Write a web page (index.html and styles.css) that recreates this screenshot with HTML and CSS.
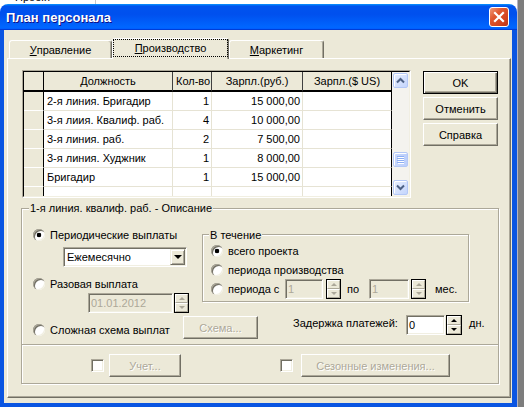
FILE: index.html
```html
<!DOCTYPE html>
<html lang="ru">
<head>
  <meta charset="UTF-8">
  <title>План персонала</title>
  <link rel="stylesheet" href="styles.css">
</head>
<body>
<div class="screen">
  <div class="desk">
    <div class="behind">
      <span class="behind__text">Проект</span>
    </div>
    <div class="dialog">
      <div class="titlebar">
        <span class="titlebar__text">План персонала</span>
        <span class="titlebar__close">
          <svg width="12" height="12" viewBox="0 0 12 12"><path d="M2 2L10 10M10 2L2 10" stroke="#fff" stroke-width="2.2" stroke-linecap="square"/></svg>
        </span>
      </div>
      <div class="frame">
        <div class="tabs">
          <div class="tab tab--mgmt"><u>У</u>правление</div>
          <div class="tab tab--prod tab--active"><span class="tab__focus"><u>П</u>роизводство</span></div>
          <div class="tab tab--mkt"><u>М</u>аркетинг</div>
        </div>
        <div class="page">
          <div class="page__top">
            <div class="grid">
              <div class="grid__inner">
                <div class="grid__rows">
                  <div class="grid__row grid__row--head">
                    <div class="cell cell--side"></div>
                    <div class="cell">Должность</div>
                    <div class="cell">Кол-во</div>
                    <div class="cell">Зарпл.(руб.)</div>
                    <div class="cell">Зарпл.($ US)</div>
                  </div>
                  <div class="grid__row">
                    <div class="cell cell--side"></div>
                    <div class="cell">2-я линия. Бригадир</div>
                    <div class="cell cell--num">1</div>
                    <div class="cell cell--num">15 000,00</div>
                    <div class="cell"></div>
                  </div>
                  <div class="grid__row">
                    <div class="cell cell--side"></div>
                    <div class="cell">3-я лиия. Квалиф. раб.</div>
                    <div class="cell cell--num">4</div>
                    <div class="cell cell--num">10 000,00</div>
                    <div class="cell"></div>
                  </div>
                  <div class="grid__row">
                    <div class="cell cell--side"></div>
                    <div class="cell">3-я линия. раб.</div>
                    <div class="cell cell--num">2</div>
                    <div class="cell cell--num">7 500,00</div>
                    <div class="cell"></div>
                  </div>
                  <div class="grid__row">
                    <div class="cell cell--side"></div>
                    <div class="cell">3-я линия. Худжник</div>
                    <div class="cell cell--num">1</div>
                    <div class="cell cell--num">8 000,00</div>
                    <div class="cell"></div>
                  </div>
                  <div class="grid__row">
                    <div class="cell cell--side"></div>
                    <div class="cell">Бригадир</div>
                    <div class="cell cell--num">1</div>
                    <div class="cell cell--num">15 000,00</div>
                    <div class="cell"></div>
                  </div>
                  <div class="grid__row">
                    <div class="cell cell--side"></div>
                    <div class="cell"></div>
                    <div class="cell"></div>
                    <div class="cell"></div>
                    <div class="cell"></div>
                  </div>
                </div>
                <div class="vscroll">
                  <div class="vscroll__btn">
                    <svg width="9" height="7" viewBox="0 0 9 7"><polyline points="1,5.5 4.5,2 8,5.5" fill="none" stroke="#4D6185" stroke-width="2"/></svg>
                  </div>
                  <div class="vscroll__track">
                    <div class="vscroll__thumb">
                      <svg width="7" height="8" viewBox="0 0 7 8"><path d="M0 0.5H7M0 2.5H7M0 4.5H7M0 6.5H7" stroke="#8DAEF3" stroke-width="1"/><path d="M1 1.5H7M1 3.5H7M1 5.5H7M1 7.5H7" stroke="#fff" stroke-width="1"/></svg>
                    </div>
                  </div>
                  <div class="vscroll__btn">
                    <svg width="9" height="7" viewBox="0 0 9 7"><polyline points="1,1.5 4.5,5 8,1.5" fill="none" stroke="#4D6185" stroke-width="2"/></svg>
                  </div>
                </div>
              </div>
            </div>
            <div class="actions">
              <button class="btn btn--default">OK</button>
              <button class="btn">Отменить</button>
              <button class="btn">Справка</button>
            </div>
          </div>

          <div class="group group--desc">
            <div class="group__title">1-я линия. квалиф. раб. - Описание</div>
            <div class="upper">
              <div class="opts">
                <div class="opt opt--periodic"><span class="radio radio--on"></span>Периодические выплаты</div>
                <div class="combo sunken">
                  <span class="combo__value">Ежемесячно</span>
                  <span class="combo__btn raised"><span class="tri tri--down"></span></span>
                </div>
                <div class="opt opt--once"><span class="radio"></span>Разовая выплата</div>
                <div class="date-row">
                  <span class="field field--off field--date sunken">01.01.2012</span>
                  <span class="spin spin--off"><span class="spin__btn"><span class="tri tri--up"></span></span><span class="spin__btn"><span class="tri tri--down"></span></span></span>
                </div>
              </div>
              <div class="group group--period">
                <div class="group__title group__title--period">В течение</div>
                <div class="opt period__all"><span class="radio radio--on"></span>всего проекта</div>
                <div class="opt period__prod"><span class="radio"></span>периода производства</div>
                <div class="opt period__range">
                  <span class="radio"></span>
                  <span class="range__label">периода с</span>
                  <span class="field field--off field--from sunken">1</span>
                  <span class="spin spin--off spin--gap3"><span class="spin__btn"><span class="tri tri--up"></span></span><span class="spin__btn"><span class="tri tri--down"></span></span></span>
                  <span class="range__to">по</span>
                  <span class="field field--off field--to sunken">1</span>
                  <span class="spin spin--off spin--gap2"><span class="spin__btn"><span class="tri tri--up"></span></span><span class="spin__btn"><span class="tri tri--down"></span></span></span>
                  <span class="range__unit">мес.</span>
                </div>
              </div>
            </div>
            <div class="upper-bottom">
              <div class="opt opt--complex"><span class="radio"></span>Сложная схема выплат</div>
              <button class="btn btn--off btn--scheme">Схема...</button>
              <span class="delay__label">Задержка платежей:</span>
              <span class="field field--delay sunken">0</span>
              <span class="spin spin--delay"><span class="spin__btn"><span class="tri tri--up"></span></span><span class="spin__btn"><span class="tri tri--down"></span></span></span>
              <span class="delay__unit">дн.</span>
            </div>
            <div class="group__rule"></div>
            <div class="lower">
              <span class="check check--account sunken"></span>
              <button class="btn btn--off btn--account">Учет...</button>
              <span class="check check--season sunken"></span>
              <button class="btn btn--off btn--season">Сезонные изменения...</button>
            </div>
          </div>
        </div>
      </div>
    </div>
  </div>
  <div class="edge"></div>
</div>
</body>
</html>
```

FILE: styles.css
```css
* {
  box-sizing: border-box;
}
body {
  margin: 0;
  overflow: hidden;
  background: #7d7d7d;
  font-family: "Liberation Sans", Arial, sans-serif;
  font-size: 11px;
  color: #000;
}
button {
  font: inherit;
  padding: 0;
  outline: none;
}

/* screen and the window behind */
.screen {
  display: flex;
  width: 524px;
  height: 407px;
}
.desk {
  width: 517px;
  background: #fff;
  display: flex;
  flex-direction: column;
}
.behind {
  height: 4px;
  overflow: hidden;
  display: flex;
}
.behind__text {
  width: 96px;
  padding-left: 15px;
  margin-top: -9px;
  line-height: 13px;
  border-right: 1px solid #c8c8c8;
}
.edge {
  flex: 1;
  background: #7d7d7d;
  border-left: 1px solid #b4b4c4;
}

/* dialog frame */
.dialog {
  flex: 1;
  display: flex;
  flex-direction: column;
}
.titlebar {
  height: 26px;
  border-radius: 8px 8px 0 0;
  background: linear-gradient(180deg, #0997ff, #0053ee 8%, #0050ee 40%, #06f 88%, #06f 93%, #005bff 95%, #003dd7 96%, #003dd7);
  display: flex;
  align-items: center;
  justify-content: space-between;
  padding: 0 8px 0 6px;
}
.titlebar__text {
  color: #fff;
  font-weight: bold;
  font-size: 13px;
  text-shadow: 1px 1px #0f1089;
}
.titlebar__close {
  width: 20px;
  height: 20px;
  border: 1px solid #fff;
  border-radius: 3px;
  background: linear-gradient(135deg, #ef9a7a, #e0582f 35%, #d2421f 75%, #b8341a);
  display: flex;
  align-items: center;
  justify-content: center;
}
.frame {
  flex: 1;
  background: #ece9d8;
  border: solid #0a55e2;
  border-width: 0 5px 4px 4px;
}

/* tabs */
.tabs {
  height: 28px;
  display: flex;
  align-items: flex-end;
  padding-left: 5px;
}
.tab {
  height: 18px;
  border: 1px solid;
  border-bottom: 0;
  border-color: #fff #716f64 #fff #fff;
  border-radius: 3px 3px 0 0;
  box-shadow: inset -1px 0 #aca899;
  display: flex;
  align-items: center;
  justify-content: center;
  background: #ece9d8;
}
.tab--mgmt { width: 103px; }
.tab--prod { width: 117px; }
.tab--mkt { width: 95px; }
.tab--active {
  height: 21px;
  margin-bottom: -1px;
  position: relative;
  z-index: 1;
  align-items: flex-start;
}
.tab__focus {
  width: 100%;
  height: 18px;
  border: 1px dotted #000;
  display: flex;
  align-items: center;
  justify-content: center;
}

/* page */
.page {
  margin-left: 3px;
  width: 504px;
  height: 340px;
  border: 1px solid;
  border-color: #fff #716f64 #716f64 #fff;
  box-shadow: inset -1px -1px #aca899;
}
.page__top {
  display: flex;
  margin: 11px 0 0 14px;
}

/* common 3d borders */
.sunken {
  border: 1px solid;
  border-color: #aca899 #fff #fff #aca899;
  box-shadow: inset 1px 1px #716f64, inset -1px -1px #f1efe2;
}
.raised {
  border: 1px solid;
  border-color: #f1efe2 #716f64 #716f64 #f1efe2;
  box-shadow: inset 1px 1px #fff, inset -1px -1px #aca899;
  background: #ece9d8;
}

/* grid */
.grid {
  width: 389px;
  height: 128px;
  border: 1px solid;
  border-color: #aca899 #fff #fff #aca899;
}
.grid__inner {
  height: 100%;
  display: flex;
  border: 1px solid;
  border-color: #000 #f1efe2 #f1efe2 #000;
}
.grid__rows {
  width: 368px;
  height: 124px;
  overflow: hidden;
  background: #fff;
}
.grid__row {
  display: grid;
  grid-template-columns: 20px 129px 39px 91px 89px;
  height: 19px;
}
.cell {
  border-right: 1px solid #e6e3d4;
  border-bottom: 1px solid #e6e3d4;
  padding: 0 3px;
  line-height: 18px;
  white-space: nowrap;
  overflow: hidden;
}
.cell--num {
  text-align: right;
  padding-right: 2px;
}
.cell:last-child {
  border-right-color: #000;
}
.cell--side {
  background: #ece9d8;
  border-right-color: #000;
  border-bottom-color: #fff;
}
.grid__row--head {
  height: 20px;
}
.grid__row--head .cell {
  background: #ece9d8;
  border-right-color: #404040;
  border-bottom: 2px solid #000;
  text-align: center;
}
.grid__row--head .cell--side,
.grid__row--head .cell:last-child {
  border-right-color: #000;
}

/* scrollbar */
.vscroll {
  width: 17px;
  display: flex;
  flex-direction: column;
  background: #f4f3ee;
}
.vscroll__btn {
  margin: 1px;
  height: 15px;
  border: 1px solid #b4c8f6;
  border-radius: 2px;
  background: linear-gradient(135deg, #e8effe, #c4d5fc);
  box-shadow: inset 1px 1px #fff;
  display: flex;
  align-items: center;
  justify-content: center;
}
.vscroll__track {
  flex: 1;
}
.vscroll__thumb {
  margin: 63px 1px 0;
  height: 15px;
  border: 1px solid #b4c8f6;
  border-radius: 2px;
  background: linear-gradient(90deg, #c9d8fc, #bccffb);
  box-shadow: inset 1px 1px #fff;
  display: flex;
  align-items: center;
  justify-content: center;
}

/* buttons */
.actions {
  margin: 1px 0 0 12px;
  display: flex;
  flex-direction: column;
  gap: 3px;
}
.btn {
  width: 75px;
  height: 23px;
  background: #ece9d8;
  border: 1px solid;
  border-color: #fff #716f64 #716f64 #fff;
  box-shadow: inset -1px -1px #aca899;
  color: #000;
}
.btn--default {
  border-color: #000;
  box-shadow: inset 1px 1px #fff, inset -1px -1px #716f64, inset -2px -2px #aca899;
}
.btn--off {
  color: #aca899;
  text-shadow: 1px 1px #fff;
}

/* group boxes */
.group {
  border: 1px solid #aca899;
  box-shadow: inset 1px 1px #fff, 1px 1px #fff;
}
.group--desc {
  margin: 10px 0 0 13px;
  width: 478px;
  height: 176px;
}
.group__title {
  width: max-content;
  margin: -7px 0 0 7px;
  padding: 0 1px;
  line-height: 13px;
  background: #ece9d8;
}
.group__rule {
  margin-top: 5px;
  border-top: 1px solid #aca899;
  border-bottom: 1px solid #fff;
}

/* options */
.upper {
  display: flex;
}
.opts {
  width: 169px;
  margin-left: 11px;
}
.opt {
  display: flex;
  align-items: center;
  height: 13px;
  gap: 5px;
  white-space: nowrap;
}
.radio {
  flex: none;
  width: 12px;
  height: 12px;
  border-radius: 50%;
  background: #fff;
  box-shadow: inset 1px 1px #aca899, inset 2px 2px #716f64, inset -1px -1px #f1efe2;
}
.radio--on {
  background: radial-gradient(circle, #000 0 2px, #fff 2.6px);
}
.opt--periodic { margin-top: 13px; }
.opt--once { margin-top: 10px; }

.combo {
  margin: 6px 0 0 30px;
  width: 124px;
  height: 20px;
  padding: 1px;
  background: #fff;
  display: flex;
}
.combo__value {
  flex: 1;
  padding-left: 2px;
  line-height: 16px;
}
.combo__btn {
  width: 15px;
  display: flex;
  align-items: center;
  justify-content: center;
}

.tri {
  width: 0;
  height: 0;
  border-left: 3px solid transparent;
  border-right: 3px solid transparent;
}
.tri--down { border-top: 3px solid currentColor; }
.tri--up { border-bottom: 3px solid currentColor; }
.combo__btn .tri {
  border-left-width: 4px;
  border-right-width: 4px;
  border-top-width: 4px;
}

.date-row {
  display: flex;
  gap: 1px;
  margin: 3px 0 0 55px;
}
.field {
  height: 20px;
  padding: 0 2px;
  line-height: 18px;
  background: #fff;
}
.field--off {
  background: #ece9d8;
  color: #aca899;
}
.field--date { width: 85px; }
.field--from { width: 38px; }
.field--to { width: 40px; }
.field--delay { width: 39px; margin-top: 2px; }

.spin {
  width: 15px;
  height: 20px;
  border: 1px solid #000;
  display: flex;
  flex-direction: column;
  color: #000;
}
.spin--off { color: #aca899; }
.spin__btn {
  flex: 1;
  background: #ece9d8;
  border: 1px solid;
  border-color: #fff #aca899 #aca899 #fff;
  display: flex;
  align-items: center;
  justify-content: center;
}

/* period group */
.group--period {
  margin-top: 19px;
  width: 267px;
  height: 68px;
}
.group__title--period {
  margin: -6px 0 0 6px;
}
.period__all { margin: 2px 0 0 8px; }
.period__prod { margin: 6px 0 0 8px; }
.period__range {
  margin: 3px 0 0 8px;
  height: 20px;
  gap: 0;
}
.period__range .radio { margin-right: 5px; }
.range__label { width: 57px; }
.spin--gap3 { margin-left: 3px; }
.spin--gap2 { margin-left: 2px; }
.range__to {
  width: 28px;
  padding-left: 6px;
}
.range__unit { margin-left: 9px; }

/* payment scheme and delay */
.upper-bottom {
  display: flex;
  align-items: flex-start;
  height: 26px;
}
.opt--complex {
  width: 150px;
  margin: 10px 0 0 11px;
}
.btn--scheme { margin-top: 3px; }
.delay__label {
  width: 113px;
  margin: 4px 0 0 35px;
  line-height: 13px;
}
.spin--delay {
  margin: 2px 0 0 1px;
  width: 16px;
}
.delay__unit {
  margin: 4px 0 0 7px;
  line-height: 13px;
}

/* bottom row */
.lower {
  display: flex;
  align-items: center;
  margin-top: 8px;
  height: 23px;
}
.check {
  width: 13px;
  height: 13px;
  background: #fff;
}
.check--account { margin-left: 69px; }
.btn--account {
  width: 72px;
  margin-left: 5px;
}
.check--season { margin-left: 99px; }
.btn--season {
  width: 149px;
  margin-left: 8px;
}
```
